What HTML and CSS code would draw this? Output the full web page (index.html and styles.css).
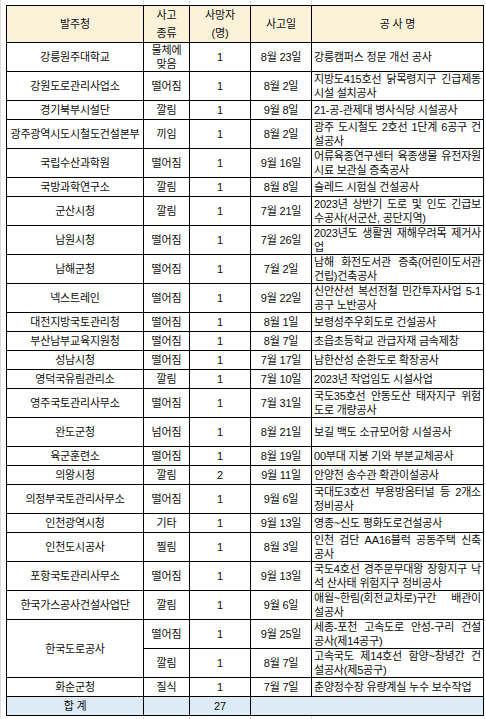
FILE: index.html
```html
<!DOCTYPE html>
<html lang="ko">
<head>
<meta charset="utf-8">
<title>사고 현황</title>
<link rel="stylesheet" href="styles.css">
</head>
<body>
<div class="page">
<table class="sheet">
<colgroup>
<col class="w1"><col class="w2"><col class="w3"><col class="w4"><col class="w5">
</colgroup>
<thead>
<tr class="hd">
<th>발주청</th>
<th><span class="ln">사고</span><span class="ln">종류</span></th>
<th><span class="ln">사망자</span><span class="ln">(명)</span></th>
<th>사고일</th>
<th>공 사 명</th>
</tr>
</thead>
<tbody>
<tr class="d"><td>강릉원주대학교</td><td><span class="ln">물체에</span><span class="ln">맞음</span></td><td>1</td><td>8월 23일</td><td class="nm">강릉캠퍼스 정문 개선 공사</td></tr>
<tr class="d"><td>강원도로관리사업소</td><td>떨어짐</td><td>1</td><td>8월 2일</td><td class="nm"><span class="ln j">지방도415호선 닭목령지구 긴급제동</span><span class="ln">시설 설치공사</span></td></tr>
<tr class="s"><td>경기북부시설단</td><td>깔림</td><td>1</td><td>9월 8일</td><td class="nm">21-공-관제대 병사식당 시설공사</td></tr>
<tr class="d"><td>광주광역시도시철도건설본부</td><td>끼임</td><td>1</td><td>8월 2일</td><td class="nm"><span class="ln j">광주 도시철도 2호선 1단계 6공구 건</span><span class="ln">설공사</span></td></tr>
<tr class="d"><td>국립수산과학원</td><td>떨어짐</td><td>1</td><td>9월 16일</td><td class="nm"><span class="ln j">어류육종연구센터 육종생물 유전자원</span><span class="ln">시료 보관실 증축공사</span></td></tr>
<tr class="s"><td>국방과학연구소</td><td>깔림</td><td>1</td><td>8월 8일</td><td class="nm">슬레드 시험실 건설공사</td></tr>
<tr class="d"><td>군산시청</td><td>깔림</td><td>1</td><td>7월 21일</td><td class="nm"><span class="ln j">2023년 상반기 도로 및 인도 긴급보</span><span class="ln">수공사(서군산, 공단지역)</span></td></tr>
<tr class="d"><td>남원시청</td><td>떨어짐</td><td>1</td><td>7월 26일</td><td class="nm"><span class="ln j">2023년도 생활권 재해우려목 제거사</span><span class="ln">업</span></td></tr>
<tr class="d"><td>남해군청</td><td>떨어짐</td><td>1</td><td>7월 2일</td><td class="nm"><span class="ln j">남해 화전도서관 증축(어린이도서관</span><span class="ln">건립)건축공사</span></td></tr>
<tr class="d"><td>넥스트레인</td><td>떨어짐</td><td>1</td><td>9월 22일</td><td class="nm"><span class="ln j">신안산선 복선전철 민간투자사업 5-1</span><span class="ln">공구 노반공사</span></td></tr>
<tr class="s"><td>대전지방국토관리청</td><td>떨어짐</td><td>1</td><td>8월 1일</td><td class="nm">보령성주우회도로 건설공사</td></tr>
<tr class="s"><td>부산남부교육지원청</td><td>떨어짐</td><td>1</td><td>8월 7일</td><td class="nm">초읍초등학교 관급자재 금속제창</td></tr>
<tr class="s"><td>성남시청</td><td>떨어짐</td><td>1</td><td>7월 17일</td><td class="nm">남한산성 순환도로 확장공사</td></tr>
<tr class="s"><td>영덕국유림관리소</td><td>깔림</td><td>1</td><td>7월 10일</td><td class="nm">2023년 작업임도 시설사업</td></tr>
<tr class="d"><td>영주국토관리사무소</td><td>떨어짐</td><td>1</td><td>7월 31일</td><td class="nm"><span class="ln j">국도35호선 안동도산 태자지구 위험</span><span class="ln">도로 개량공사</span></td></tr>
<tr class="d"><td>완도군청</td><td>넘어짐</td><td>1</td><td>8월 21일</td><td class="nm">보길 백도 소규모어항 시설공사</td></tr>
<tr class="s"><td>육군훈련소</td><td>떨어짐</td><td>1</td><td>8월 19일</td><td class="nm">00부대 지붕 기와 부분교체공사</td></tr>
<tr class="s"><td>의왕시청</td><td>깔림</td><td>2</td><td>9월 11일</td><td class="nm">안양천 송수관 확관이설공사</td></tr>
<tr class="d"><td>의정부국토관리사무소</td><td>떨어짐</td><td>1</td><td>9월 6일</td><td class="nm"><span class="ln j">국대도3호선 부용방음터널 등 2개소</span><span class="ln">정비공사</span></td></tr>
<tr class="s"><td>인천광역시청</td><td>기타</td><td>1</td><td>9월 13일</td><td class="nm">영종~신도 평화도로건설공사</td></tr>
<tr class="d"><td>인천도시공사</td><td>찔림</td><td>1</td><td>8월 3일</td><td class="nm"><span class="ln j">인천 검단 AA16블럭 공동주택 신축</span><span class="ln">공사</span></td></tr>
<tr class="d"><td>포항국토관리사무소</td><td>떨어짐</td><td>1</td><td>9월 13일</td><td class="nm"><span class="ln j">국도4호선 경주문무대왕 장항지구 낙</span><span class="ln">석 산사태 위험지구 정비공사</span></td></tr>
<tr class="d"><td>한국가스공사건설사업단</td><td>깔림</td><td>1</td><td>9월 6일</td><td class="nm"><span class="ln j">애월~한림(회전교차로)구간 배관이</span><span class="ln">설공사</span></td></tr>
<tr class="d"><td rowspan="2">한국도로공사</td><td>떨어짐</td><td>1</td><td>9월 25일</td><td class="nm"><span class="ln j">세종-포천 고속도로 안성-구리 건설</span><span class="ln">공사(제14공구)</span></td></tr>
<tr class="d"><td>깔림</td><td>1</td><td>8월 7일</td><td class="nm"><span class="ln j">고속국도 제14호선 함양~창녕간 건</span><span class="ln">설공사(제5공구)</span></td></tr>
<tr class="s"><td>화순군청</td><td>질식</td><td>1</td><td>7월 7일</td><td class="nm">춘양정수장 유량계실 누수 보수작업</td></tr>
<tr class="s total"><td>합 계</td><td></td><td>27</td><td colspan="2"></td></tr>
</tbody>
</table>
</div>
</body>
</html>
```

FILE: styles.css
```css
html, body {
  margin: 0;
  padding: 0;
  background: #ffffff;
}

body {
  font-family: "Liberation Sans", "Noto Sans CJK KR", sans-serif;
  font-size: 11px;
  letter-spacing: -0.2px;
  color: #0d0d0d;
}

.page {
  box-sizing: border-box;
  min-height: 100vh;
  padding: 5px 0 0 5px;
  border-left: 1px solid #dcdcdc;
  background-color: #ffffff;
  background-image: linear-gradient(90deg,
    transparent 142px, #dcdcdc 142px, #dcdcdc 143px, transparent 143px,
    transparent 188px, #dcdcdc 188px, #dcdcdc 189px, transparent 189px,
    transparent 249px, #dcdcdc 249px, #dcdcdc 250px, transparent 250px,
    transparent 310px, #dcdcdc 310px, #dcdcdc 311px, transparent 311px);
}

.sheet {
  border-collapse: collapse;
  table-layout: fixed;
  width: 478px;
}

.w1 { width: 137px; }
.w2 { width: 46px; }
.w3 { width: 61px; }
.w4 { width: 61px; }
.w5 { width: 172px; }

.sheet th,
.sheet td {
  border: 1px solid #000000;
  padding: 0;
  line-height: 14px;
  text-align: center;
  vertical-align: middle;
  font-weight: normal;
  white-space: nowrap;
  overflow: hidden;
  background: #ffffff;
}

.hd th {
  background: #fcf2da;
  height: 36px;
  line-height: 18px;
}

.d td { height: 28px; }
.s td { height: 18px; }

.sheet td.nm {
  text-align: left;
  padding: 0 2px 0 2px;
}

.ln {
  display: block;
  white-space: nowrap;
}

.ln.j {
  text-align: justify;
  text-align-last: justify;
}

.sheet .total td {
  background: #ddebf7;
}
```
